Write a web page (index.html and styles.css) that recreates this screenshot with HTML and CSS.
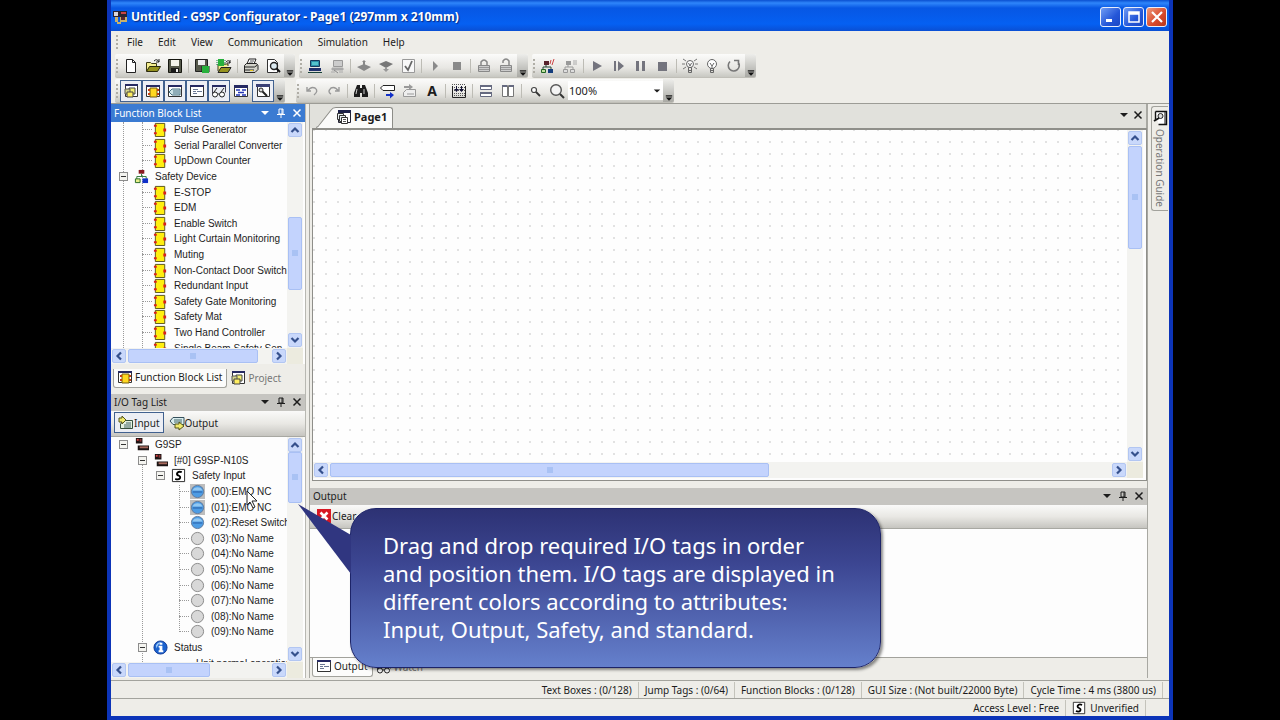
FILE: index.html
```html
<!DOCTYPE html>
<html lang="en">
<head>
<meta charset="utf-8">
<title>Untitled - G9SP Configurator - Page1</title>
<link rel="stylesheet" href="styles.css">
</head>
<body>
<svg class="defs" aria-hidden="true">
  <symbol id="block" viewBox="0 0 16 16"><path d="M2.500 1.500h10v14h-10z" fill="#ffee10" stroke="#55501a"/><path d="M1 3h3v2H1zM1 11h3v2H1zM11 7h3v3h-3z" fill="#d8201c"/></symbol>
  <symbol id="device" viewBox="0 0 16 16"><path d="M5 1h6v4H5z" fill="#8c1a22"/><path d="M8 5v3M3 11V8h10v3" fill="none" stroke="#2f7a3a"/><path d="M1.500 10.500h5v4h-5z" fill="#e8f08c" stroke="#226622"/><path d="M9 10h6v5H9z" fill="#1030c8"/></symbol>
  <symbol id="plc" viewBox="0 0 16 16"><path d="M2 1h7v6H2zM4 9h12v5H4z" fill="#1c1414"/><path d="M3 2h2v2H3z" fill="#d44"/><path d="M6 2h2v3H6z" fill="#833"/><path d="M6 10h9v2H6z" fill="#a7695c"/></symbol>
  <symbol id="safe" viewBox="0 0 16 16"><path d="M1.500 1.500h13v13h-13z" fill="#fff" stroke="#222"/><path d="M11.500 4.500Q8 3 6.500 5.500Q6 7.500 8 8Q10.500 9 9.500 11Q8 13 4.500 11.500" fill="none" stroke="#000" stroke-width="2"/></symbol>
  <symbol id="on" viewBox="0 0 16 16"><circle cx="8" cy="8" r="6.500" fill="#4d9ce4" stroke="#60799a"/><path d="M2.500 7A6 6 0 0 1 13.500 7z" fill="#93c8f2"/><path d="M3 8.500h10" stroke="#2559a2"/></symbol>
  <symbol id="off" viewBox="0 0 16 16"><circle cx="8" cy="8" r="6.500" fill="#d8d8d8" stroke="#858585"/></symbol>
  <symbol id="info" viewBox="0 0 16 16"><circle cx="8" cy="8" r="7" fill="#1b62cf" stroke="#123b96"/><path d="M3 6Q5 2 9 2.500Q5 4 4 9z" fill="#9dcbf8"/><path d="M7 3h3v2H7zM6 6h4v5h1v2H6v-2h1V8H6z" fill="#fff"/></symbol>
  <symbol id="down" viewBox="0 0 10 10"><path d="M1 3h8L5 7z" fill="currentColor"/></symbol>
  <symbol id="pin" viewBox="0 0 10 10"><path d="M3 1h4v5H3zM6 1v5M1 6.500h8M5 7v3" fill="none" stroke="currentColor"/></symbol>
  <symbol id="x" viewBox="0 0 10 10"><path d="M1.500 1.500l7 7M8.500 1.500l-7 7" fill="none" stroke="currentColor" stroke-width="1.500"/></symbol>
  <symbol id="chev" viewBox="0 0 10 10"><path d="M1.500 3L5 6.500L8.500 3" fill="none" stroke="#35508c" stroke-width="2.200"/></symbol>
  <symbol id="over" viewBox="0 0 10 10"><path d="M1 3h8" stroke="#111" stroke-width="1.500"/><path d="M1 5h8L5 9z" fill="#111"/></symbol>
  <symbol id="wblock" viewBox="0 0 16 16"><path d="M1.500 2.500h13v11h-13z" fill="#fff" stroke="#333"/><path d="M1 2h14v2H1z" fill="#262a62"/><path d="M5 5h7v9H5z" fill="#ffd820" stroke="#735c10"/><path d="M3 7h2M3 11h2M12 7h2M12 11h2" stroke="#c84010" stroke-width="2"/></symbol>
  <symbol id="wproj" viewBox="0 0 16 16"><path d="M2.500 1.500h12v12h-12z" fill="#fff" stroke="#333"/><path d="M2 1h13v2H2z" fill="#262a62"/><path d="M6 5h6v6H6z" fill="#f2ef70" stroke="#444"/><path d="M2 6h5v5H2z" fill="#d6d68c" stroke="#555"/><path d="M4 9h6v5H4z" fill="#ffee60" stroke="#444"/></symbol>
  <symbol id="wtag" viewBox="0 0 16 16"><path d="M1.500 2.500h13v11h-13z" fill="#fff" stroke="#333"/><path d="M1 2h14v2H1z" fill="#262a62"/><path d="M2 9l3-3h8v6H5z" fill="#cfe4e8" stroke="#467080"/><path d="M6 8h6M6 10h6" stroke="#507788"/></symbol>
  <symbol id="wout" viewBox="0 0 16 16"><path d="M1.500 2.500h13v11h-13z" fill="#fff" stroke="#333"/><path d="M1 2h14v2H1z" fill="#262a62"/><path d="M4 6.500h5M4 8.500h3M8 8.500h5M4 10.500h4" stroke="#6b7894"/></symbol>
  <symbol id="glasses" viewBox="0 0 16 16"><path d="M1.500 2.500h13v7M1.500 2.500v9" fill="none" stroke="#445"/><path d="M1 2h14v2H1z" fill="#262a62"/><circle cx="4" cy="11.500" r="2.500" fill="#fff" stroke="#222"/><circle cx="11" cy="11.500" r="2.500" fill="#fff" stroke="#222"/><path d="M6.500 11h2M3 9l3-4M10 9l3-4" stroke="#222" fill="none"/></symbol>
  <symbol id="wflow" viewBox="0 0 16 16"><path d="M1.500 2.500h13v11h-13z" fill="#fff" stroke="#333"/><path d="M1 2h14v3H1z" fill="#262a62"/><path d="M3 7h4M9 7h4M5 9.500h6M3 12h4M9 12h4" stroke="#2537b4" stroke-width="1.600"/></symbol>
  <symbol id="wguide" viewBox="0 0 16 16"><path d="M2.500 2.500h12v11h-12z" fill="#fff" stroke="#333"/><path d="M1 1h14v3H1z" fill="#3a4074"/><circle cx="6" cy="7" r="2" fill="#ddd" stroke="#222"/><path d="M7.500 8.500L12 13" stroke="#222" stroke-width="2"/></symbol>
  <symbol id="guide" viewBox="0 0 16 16"><path d="M3.500 1.500h11v13h-8M3.500 1.500v8" fill="#fff" stroke="#111" stroke-width="1.400"/><path d="M13 2v12" stroke="#111"/><circle cx="8.500" cy="6" r="2.500" fill="#ddd" stroke="#222"/><path d="M7 8L2 11" stroke="#111" stroke-width="2"/></symbol>
  <symbol id="new" viewBox="0 0 16 16"><path d="M3.500 1.500h6l3 3v10h-9z" fill="#fff" stroke="#222"/><path d="M9.500 1.500v3h3" fill="none" stroke="#222"/></symbol>
  <symbol id="open" viewBox="0 0 16 16"><path d="M1.500 13V4.500h4l1 1h5v3" fill="#f4ed90" stroke="#3c3a14"/><path d="M1.500 13.500l3-5h11l-3 5z" fill="#95921e" stroke="#2b2a0d"/><path d="M9 3q3-3 5 1M14 1v3h-3" fill="none" stroke="#222"/></symbol>
  <symbol id="save" viewBox="0 0 16 16"><path d="M1.500 1.500h13v13h-13z" fill="#55584a" stroke="#15160f"/><path d="M4 2h8v6H4z" fill="#f2f2ea"/><path d="M4 10h8v5H4z" fill="#181818"/><path d="M9 11h2v3H9z" fill="#eee"/></symbol>
  <symbol id="savec" viewBox="0 0 16 16"><path d="M1.500 1.500h12v12h-12z" fill="#55584a" stroke="#222"/><path d="M4 2h7v5H4z" fill="#eee"/><path d="M8 8h7v7H8z" fill="#27b03c"/><path d="M7 9h1M7 11h1M7 13h1M15 9h1M15 11h1M15 13h1" stroke="#111"/></symbol>
  <symbol id="openc" viewBox="0 0 16 16"><path d="M2 13V6h10v2" fill="#f4ed90" stroke="#3c3a14"/><path d="M2 14.500l3-5h10l-3 5z" fill="#95921e" stroke="#222"/><path d="M2 1h6v7H2z" fill="#27b03c"/><path d="M1 2v6M9 2v6" stroke="#174" stroke-dasharray="1 1"/><path d="M10 4q3-3 4 1M14 2v3h-3" fill="none" stroke="#222"/></symbol>
  <symbol id="print" viewBox="0 0 16 16"><path d="M4 6l2-5h7l-2 5" fill="#fff" stroke="#222"/><path d="M7 3h4M6 5h4" stroke="#555"/><path d="M1.500 7.500l2-2h10l1.500 2v4l-3 3H1.500z" fill="#d2d2ca" stroke="#222"/><path d="M1.500 9h10l3-2M2 12h9" fill="none" stroke="#222"/><path d="M7 12h3v1H7z" fill="#e8c81c"/></symbol>
  <symbol id="preview" viewBox="0 0 16 16"><path d="M2.500 1.500h7l3 3v10h-10z" fill="#fff" stroke="#333"/><circle cx="9" cy="8" r="3.500" fill="#dceaf0" stroke="#222" stroke-width="1.400"/><path d="M11.500 10.500L15 14" stroke="#111" stroke-width="2"/></symbol>
  <symbol id="pc" viewBox="0 0 16 16"><path d="M3.500 2.500h9v6h-9z" fill="#2c8fa8" stroke="#173a5c"/><path d="M5 4h6v3H5z" fill="#54c4cc"/><path d="M2 10h12v3H2z" fill="#20306c"/><path d="M1 14.500h14" stroke="#174038"/></symbol>
  <symbol id="pcoff" viewBox="0 0 16 16"><path d="M4.500 2.500h9v6h-9z" fill="#ccc" stroke="#999"/><path d="M3 10h11v2H3zM2 14h4M10 14h4" fill="#aaa" stroke="#aaa"/><path d="M5 12l4 3" stroke="#888"/></symbol>
  <symbol id="dl" viewBox="0 0 16 16"><path d="M8 2l2 2H9v3H7V4H6zM1 9l7-3 7 3-7 4z" fill="#888"/></symbol>
  <symbol id="ul" viewBox="0 0 16 16"><path d="M1 6l7-3 7 3-7 4z" fill="#777"/><path d="M7 9h2v2h2l-3 3-3-3h2z" fill="#999"/></symbol>
  <symbol id="check" viewBox="0 0 16 16"><path d="M2.500 1.500h12v13h-12z" fill="#f8f8f8" stroke="#999"/><path d="M5 8l3 4 4-9" fill="none" stroke="#666" stroke-width="1.800"/></symbol>
  <symbol id="play" viewBox="0 0 16 16"><path d="M4 3l9 5-9 5z" fill="#74747e"/></symbol>
  <symbol id="play2" viewBox="0 0 16 16"><path d="M6 3l5 5-5 5z" fill="#8a8a8a"/></symbol>
  <symbol id="stop" viewBox="0 0 16 16"><path d="M4 4h8v8H4z" fill="#8a8a8a"/></symbol>
  <symbol id="stop2" viewBox="0 0 16 16"><path d="M3 4h9v9H3z" fill="#74747e"/></symbol>
  <symbol id="step" viewBox="0 0 16 16"><path d="M3 3h2v10H3zM7 3l6 5-6 5z" fill="#74747e"/></symbol>
  <symbol id="pause" viewBox="0 0 16 16"><path d="M3 3h3v10H3zM9 3h3v10H9z" fill="#74747e"/></symbol>
  <symbol id="lock" viewBox="0 0 16 16"><path d="M5 8V4q3-4 6 0v4" fill="none" stroke="#888" stroke-width="1.500"/><path d="M2.500 7.500h11v6h-11z" fill="#ccc" stroke="#888"/><path d="M3 9.500h10M3 11.500h10" stroke="#999"/></symbol>
  <symbol id="unlock" viewBox="0 0 16 16"><path d="M5 5V3q3-4 6 0v5" fill="none" stroke="#888" stroke-width="1.500"/><path d="M2.500 7.500h11v6h-11z" fill="#ccc" stroke="#888"/><path d="M3 9.500h10M3 11.500h10" stroke="#999"/></symbol>
  <symbol id="sim" viewBox="0 0 16 16"><path d="M4 3h5v4H4z" fill="#57222b"/><path d="M6 7v2M3 11V9h8v2" fill="none" stroke="#243"/><path d="M1.500 11.500h4v3h-4z" fill="#bfe0a0" stroke="#262"/><path d="M8 11h5v4H8z" fill="#143d7c"/><path d="M11 2l-1 4M14 1l-2 6" stroke="#c44"/></symbol>
  <symbol id="simoff" viewBox="0 0 16 16"><path d="M4 3h5v4H4z" fill="#999"/><path d="M6 7v2M3 11V9h8v2" fill="none" stroke="#999"/><path d="M1.500 11.500h4v3h-4zM8.500 11.500h4v3h-4z" fill="#ddd" stroke="#999"/><path d="M12 2v5M14 2v5" stroke="#aaa"/></symbol>
  <symbol id="bulb" viewBox="0 0 16 16"><circle cx="8" cy="6" r="4.500" fill="#fff" stroke="#666"/><path d="M6.500 10.500h3v4h-3zM6 12.500h4M6 5l2 3 2-3M8 8v2" fill="none" stroke="#666"/></symbol>
  <symbol id="bulbon" viewBox="0 0 16 16"><circle cx="8" cy="6" r="3.500" fill="#fff" stroke="#666"/><path d="M6.500 9.500h3v5h-3zM6 12.500h4M6.500 5L8 8l1.500-3" fill="none" stroke="#666"/><path d="M1 1l3 2M0 6h3M1 11l3-2M15 1l-3 2M16 6h-3M15 11l-3-2" stroke="#777"/></symbol>
  <symbol id="reset" viewBox="0 0 16 16"><path d="M4 3.500A5.500 5.500 0 1 0 12 4M8 2.500h4.500V7" fill="none" stroke="#777" stroke-width="1.600"/></symbol>
  <symbol id="undo" viewBox="0 0 16 16"><path d="M3 4v4h4M3.500 8Q7 3 11 5Q15 8 10 12" fill="none" stroke="#999" stroke-width="1.400"/></symbol>
  <symbol id="redo" viewBox="0 0 16 16"><path d="M13 4v4H9M12.500 8Q9 3 5 5Q1 9 5 11" fill="none" stroke="#999" stroke-width="1.400"/></symbol>
  <symbol id="find" viewBox="0 0 16 16"><path d="M4 2h3v3h2V2h3l3 8v4H9v-4H7v4H1v-4z" fill="#1c1c1c"/><path d="M4 6l-1 5M11 6v5" stroke="#ccc"/></symbol>
  <symbol id="jump" viewBox="0 0 16 16"><path d="M0.500 5L3 2.500h11.500v5H3z" fill="#fff" stroke="#222"/><path d="M6 12h5" stroke="#1230c8" stroke-width="2"/><path d="M10 9l4 3-4 3.500z" fill="#1230c8"/></symbol>
  <symbol id="jump2" viewBox="0 0 16 16"><path d="M4.500 6.500h9v7h-12v-4z" fill="#eee" stroke="#999"/><path d="M2 4h6" stroke="#999" stroke-width="2"/><path d="M7 1l4 3-4 3z" fill="#999"/><path d="M5 11h7" stroke="#999"/></symbol>
  <symbol id="grid" viewBox="0 0 16 16"><path d="M1 1.500h14M1 4.500h14M1 7.500h14M1 10.500h14M1 12.500h14" stroke="#555" stroke-dasharray="1 1"/><path d="M1.500 3v11.500h13V3" fill="none" stroke="#222"/><path d="M5.500 3v5M10.500 3v5" stroke="#113"/><path d="M3 6h5l-2.500 3zM8 6h5l-2.500 3z" fill="#113"/></symbol>
  <symbol id="rows" viewBox="0 0 16 16"><path d="M2.500 2.500h11v4h-11zM2.500 9.500h11v4h-11z" fill="#fff" stroke="#666a80"/><path d="M2 2h12v2H2zM2 9h12v2H2z" fill="#666a80"/></symbol>
  <symbol id="cols" viewBox="0 0 16 16"><path d="M2.500 2.500h5v11h-5zM8.500 2.500h5v11h-5z" fill="#fff" stroke="#777"/><path d="M2 2h5v2H2zM9 2h5v2H9z" fill="#666a80"/></symbol>
  <symbol id="zs" viewBox="0 0 16 16"><circle cx="7" cy="7" r="2.500" fill="#fff" stroke="#444" stroke-width="1.200"/><path d="M9 9l4 4" stroke="#333" stroke-width="1.800"/></symbol>
  <symbol id="zl" viewBox="0 0 16 16"><circle cx="7" cy="7" r="5.300" fill="#f4f4f4" stroke="#555" stroke-width="1.400"/><path d="M11 11l4 4" stroke="#333" stroke-width="2"/></symbol>
  <symbol id="tin" viewBox="0 0 16 16"><path d="M5.500 5.500h9v8h-12V9z" fill="#e4f0e0" stroke="#35503c"/><path d="M8 8h5M6 10h7M6 12h7" stroke="#466"/><path d="M1 3h3V1l4 4-4 4V7H1z" fill="#f0e96c" stroke="#555518"/></symbol>
  <symbol id="tout" viewBox="0 0 16 16"><path d="M1 6l3-3.500h11v7H4z" fill="#d8ecee" stroke="#35505c"/><path d="M5 5h8M5 7h8" stroke="#466"/><path d="M6 9h4V7l5 4-5 4v-2H6z" fill="#f0e96c" stroke="#555518"/></symbol>
  <symbol id="clear" viewBox="0 0 16 16"><path d="M1 1h14v14H1z" fill="#d81824"/><path d="M4.500 4.500l7 7M11.500 4.500l-7 7" stroke="#fff" stroke-width="2.600"/></symbol>
  <symbol id="pages" viewBox="0 0 16 16"><path d="M2.500 1.500h12v12h-12z" fill="#fff" stroke="#223"/><path d="M2 1h13v3H2z" fill="#1c2148"/><path d="M1.500 4.500h6v6h-6z" fill="#e6eef0" stroke="#333"/><path d="M3.500 6.500h6v6h-6z" fill="#e6eef0" stroke="#333"/><path d="M5.500 8.500h6v6h-6z" fill="#fff" stroke="#333"/><path d="M7 10.500h3M7 12.500h3" stroke="#555"/></symbol>
  <symbol id="app" viewBox="0 0 16 16"><path d="M1 2h14v6H1z" fill="#2c2430"/><path d="M2 3h4v4H2z" fill="#d9d6dc"/><path d="M9 3h5v2H9z" fill="#c44"/><path d="M3 8h3v5h2V8h3v3h2V8h2v5H9v2H5v-2H3z" fill="#c9b06a"/><path d="M9 8h4v3H9z" fill="#5a2630"/></symbol>
</svg>

<div class="window">
  <header class="titlebar">
    <svg class="ic"><use href="#app"/></svg>
    <h1>Untitled - G9SP Configurator - Page1 (297mm x 210mm)</h1>
    <button class="cap" aria-label="Minimize"><svg viewBox="0 0 16 16"><path d="M3 10h6v3H3z" fill="#fff"/></svg></button>
    <button class="cap" aria-label="Maximize"><svg viewBox="0 0 16 16"><path d="M3 4h10v9H3zM3 3h10v2H3z" fill="none" stroke="#fff" stroke-width="1.500"/></svg></button>
    <button class="cap close" aria-label="Close"><svg viewBox="0 0 16 16"><path d="M3 3l10 10M13 3L3 13" stroke="#fff" stroke-width="2.200"/></svg></button>
  </header>
  <nav class="menu">
    <i class="grip"></i><button>File</button><button>Edit</button><button>View</button><button>Communication</button><button>Simulation</button><button>Help</button>
  </nav>
  <div class="bars">
    <div class="bar"><i class="grip"></i>
      <button aria-label="New"><svg class="ic"><use href="#new"/></svg></button><button aria-label="Open"><svg class="ic"><use href="#open"/></svg></button><button aria-label="Save"><svg class="ic"><use href="#save"/></svg></button><i class="sep"></i>
      <button aria-label="Save configuration"><svg class="ic"><use href="#savec"/></svg></button><button aria-label="Open configuration"><svg class="ic"><use href="#openc"/></svg></button><i class="sep"></i>
      <button aria-label="Print"><svg class="ic"><use href="#print"/></svg></button><button aria-label="Print preview"><svg class="ic"><use href="#preview"/></svg></button>
      <button class="more" aria-label="More"><svg><use href="#over"/></svg></button></div>
    <div class="bar"><i class="grip"></i>
      <button aria-label="Connect"><svg class="ic"><use href="#pc"/></svg></button><button aria-label="Disconnect"><svg class="ic"><use href="#pcoff"/></svg></button><i class="sep"></i>
      <button aria-label="Upload"><svg class="ic"><use href="#dl"/></svg></button><button aria-label="Download"><svg class="ic"><use href="#ul"/></svg></button><button aria-label="Verify"><svg class="ic"><use href="#check"/></svg></button><i class="sep"></i>
      <button aria-label="Run"><svg class="ic"><use href="#play2"/></svg></button><button aria-label="Stop"><svg class="ic"><use href="#stop"/></svg></button><i class="sep"></i>
      <button aria-label="Lock"><svg class="ic"><use href="#lock"/></svg></button><button aria-label="Unlock"><svg class="ic"><use href="#unlock"/></svg></button>
      <button class="more" aria-label="More"><svg><use href="#over"/></svg></button></div>
    <div class="bar"><i class="grip"></i>
      <button aria-label="Start simulation"><svg class="ic"><use href="#sim"/></svg></button><button aria-label="End simulation"><svg class="ic"><use href="#simoff"/></svg></button><i class="sep"></i>
      <button aria-label="Play"><svg class="ic"><use href="#play"/></svg></button><button aria-label="Step"><svg class="ic"><use href="#step"/></svg></button><button aria-label="Pause"><svg class="ic"><use href="#pause"/></svg></button><button aria-label="Stop simulation"><svg class="ic"><use href="#stop2"/></svg></button><i class="sep"></i>
      <button aria-label="Light on"><svg class="ic"><use href="#bulbon"/></svg></button><button aria-label="Light off"><svg class="ic"><use href="#bulb"/></svg></button><button aria-label="Reset"><svg class="ic"><use href="#reset"/></svg></button>
      <button class="more" aria-label="More"><svg><use href="#over"/></svg></button></div>
  </div>
  <div class="bars second">
    <div class="bar"><i class="grip"></i>
      <button class="on" aria-label="Project window"><svg class="ic"><use href="#wproj"/></svg></button><button class="on" aria-label="Function block window"><svg class="ic"><use href="#wblock"/></svg></button><button class="on" aria-label="Tag window"><svg class="ic"><use href="#wtag"/></svg></button><button class="on" aria-label="Output window"><svg class="ic"><use href="#wout"/></svg></button><button class="on" aria-label="Watch window"><svg class="ic"><use href="#glasses"/></svg></button><button aria-label="Flow window"><svg class="ic"><use href="#wflow"/></svg></button><button class="on" aria-label="Guide window"><svg class="ic"><use href="#wguide"/></svg></button>
      <button class="more" aria-label="More"><svg><use href="#over"/></svg></button></div>
    <div class="bar edit"><i class="grip"></i>
      <button aria-label="Undo"><svg class="ic"><use href="#undo"/></svg></button><button aria-label="Redo"><svg class="ic"><use href="#redo"/></svg></button><i class="sep"></i>
      <button aria-label="Find"><svg class="ic"><use href="#find"/></svg></button><i class="sep"></i>
      <button aria-label="Jump out"><svg class="ic"><use href="#jump"/></svg></button><button aria-label="Jump in"><svg class="ic"><use href="#jump2"/></svg></button><button class="letter">A</button><i class="sep"></i>
      <button aria-label="Snap"><svg class="ic"><use href="#grid"/></svg></button><i class="sep"></i>
      <button aria-label="Split rows"><svg class="ic"><use href="#rows"/></svg></button><button aria-label="Split columns"><svg class="ic"><use href="#cols"/></svg></button><i class="sep"></i>
      <button aria-label="Zoom out"><svg class="ic"><use href="#zs"/></svg></button><button aria-label="Zoom in"><svg class="ic"><use href="#zl"/></svg></button>
      <span class="combo"><select aria-label="Zoom"><option>100%</option></select><svg><use href="#down"/></svg></span>
      <button class="more" aria-label="More"><svg><use href="#over"/></svg></button></div>
  </div>

  <main class="work">
    <aside class="left">
      <section class="panel">
        <header class="head active"><h2>Function Block List</h2><button aria-label="Menu"><svg><use href="#down"/></svg></button><button aria-label="Pin"><svg><use href="#pin"/></svg></button><button aria-label="Close panel"><svg><use href="#x"/></svg></button></header>
        <div class="scrollbox">
          <div class="tree">
            <i class="stem root"></i><i class="stem first"></i>
            <ul>
              <li class="l2"><svg class="ic"><use href="#block"/></svg>Pulse Generator</li>
              <li class="l2"><svg class="ic"><use href="#block"/></svg>Serial Parallel Converter</li>
              <li class="l2"><svg class="ic"><use href="#block"/></svg>UpDown Counter</li>
              <li class="l1 node"><i class="box"></i><svg class="ic"><use href="#device"/></svg>Safety Device</li>
              <li class="l2"><svg class="ic"><use href="#block"/></svg>E-STOP</li>
              <li class="l2"><svg class="ic"><use href="#block"/></svg>EDM</li>
              <li class="l2"><svg class="ic"><use href="#block"/></svg>Enable Switch</li>
              <li class="l2"><svg class="ic"><use href="#block"/></svg>Light Curtain Monitoring</li>
              <li class="l2"><svg class="ic"><use href="#block"/></svg>Muting</li>
              <li class="l2"><svg class="ic"><use href="#block"/></svg>Non-Contact Door Switch</li>
              <li class="l2"><svg class="ic"><use href="#block"/></svg>Redundant Input</li>
              <li class="l2"><svg class="ic"><use href="#block"/></svg>Safety Gate Monitoring</li>
              <li class="l2"><svg class="ic"><use href="#block"/></svg>Safety Mat</li>
              <li class="l2"><svg class="ic"><use href="#block"/></svg>Two Hand Controller</li>
              <li class="l2"><svg class="ic"><use href="#block"/></svg>Single Beam Safety Sen</li>
            </ul>
          </div>
          <div class="vs"><i class="arrow up"><svg><use href="#chev"/></svg></i><span class="track mid"><b></b></span><i class="arrow"><svg><use href="#chev"/></svg></i></div>
          <div class="hs"><i class="arrow lt"><svg><use href="#chev"/></svg></i><span class="track long"><b></b></span><i class="arrow rt"><svg><use href="#chev"/></svg></i></div>
          <i class="corner"></i>
        </div>
        <div class="tabs"><button class="cur"><svg class="ic"><use href="#wblock"/></svg>Function Block List</button><button><svg class="ic"><use href="#wproj"/></svg>Project</button></div>
      </section>
      <section class="panel">
        <header class="head"><h2>I/O Tag List</h2><button aria-label="Menu"><svg><use href="#down"/></svg></button><button aria-label="Pin"><svg><use href="#pin"/></svg></button><button aria-label="Close panel"><svg><use href="#x"/></svg></button></header>
        <div class="tools"><button class="on"><svg class="ic"><use href="#tin"/></svg>Input</button><button><svg class="ic"><use href="#tout"/></svg>Output</button></div>
        <div class="scrollbox">
          <div class="tree">
            <i class="stem second"></i><i class="stem third"></i>
            <ul>
              <li class="l1 node"><i class="box"></i><svg class="ic"><use href="#plc"/></svg>G9SP</li>
              <li class="l2 node"><i class="box"></i><svg class="ic"><use href="#plc"/></svg>[#0] G9SP-N10S</li>
              <li class="l3 node"><i class="box"></i><svg class="ic"><use href="#safe"/></svg>Safety Input</li>
              <li class="l4 used"><svg class="ic"><use href="#on"/></svg>(00):EMO NC</li>
              <li class="l4 used"><svg class="ic"><use href="#on"/></svg>(01):EMO NC</li>
              <li class="l4"><svg class="ic"><use href="#on"/></svg>(02):Reset Switch</li>
              <li class="l4"><svg class="ic"><use href="#off"/></svg>(03):No Name</li>
              <li class="l4"><svg class="ic"><use href="#off"/></svg>(04):No Name</li>
              <li class="l4"><svg class="ic"><use href="#off"/></svg>(05):No Name</li>
              <li class="l4"><svg class="ic"><use href="#off"/></svg>(06):No Name</li>
              <li class="l4"><svg class="ic"><use href="#off"/></svg>(07):No Name</li>
              <li class="l4"><svg class="ic"><use href="#off"/></svg>(08):No Name</li>
              <li class="l4"><svg class="ic"><use href="#off"/></svg>(09):No Name</li>
              <li class="l2 node"><i class="box"></i><svg class="ic"><use href="#info"/></svg>Status</li>
              <li class="l3 bare">Unit normal operation</li>
            </ul>
          </div>
          <div class="vs"><i class="arrow up"><svg><use href="#chev"/></svg></i><span class="track top"><b></b></span><i class="arrow"><svg><use href="#chev"/></svg></i></div>
          <div class="hs"><i class="arrow lt"><svg><use href="#chev"/></svg></i><span class="track half"><b></b></span><i class="arrow rt"><svg><use href="#chev"/></svg></i></div>
          <i class="corner"></i>
        </div>
      </section>
    </aside>

    <div class="center">
      <div class="pagetabs">
        <button class="pagetab"><svg class="slope" viewBox="0 0 24 20" preserveAspectRatio="none"><path d="M0 20L2 19L19 2Q21 0.500 24 0.500V20z" fill="#fbfbfa"/><path d="M0 19.500Q3 19 5 16L18 3Q20 0.500 24 0.500" fill="none" stroke="#8d8d88"/></svg><span><svg class="ic"><use href="#pages"/></svg>Page1</span></button>
        <button class="mini" aria-label="Pages"><svg><use href="#down"/></svg></button><button class="mini" aria-label="Close page"><svg><use href="#x"/></svg></button>
      </div>
      <div class="scrollbox canvas">
        <div class="sheet"></div>
        <div class="vs"><i class="arrow up"><svg><use href="#chev"/></svg></i><span class="track page"><b></b></span><i class="arrow"><svg><use href="#chev"/></svg></i></div>
        <div class="hs"><i class="arrow lt"><svg><use href="#chev"/></svg></i><span class="track wide"><b></b></span><i class="arrow rt"><svg><use href="#chev"/></svg></i></div>
        <i class="corner"></i>
      </div>
      <section class="output">
        <header class="head"><h2>Output</h2><button aria-label="Menu"><svg><use href="#down"/></svg></button><button aria-label="Pin"><svg><use href="#pin"/></svg></button><button aria-label="Close panel"><svg><use href="#x"/></svg></button></header>
        <div class="tools"><button><svg class="ic"><use href="#clear"/></svg>Clear</button></div>
        <div class="log"></div>
        <div class="tabs"><button class="cur"><svg class="ic"><use href="#wout"/></svg>Output</button><button><svg class="ic"><use href="#glasses"/></svg>Watch</button></div>
      </section>
    </div>

    <aside class="right"><button><svg class="ic"><use href="#guide"/></svg>Operation Guide</button></aside>

    <div class="callout">
      <svg class="tail" viewBox="0 0 54 72"><path d="M1 1L54 32V71z" fill="#303680"/></svg>
      <p>Drag and drop required I/O tags in order<br>and position them. I/O tags are displayed in<br>different colors according to attributes:<br>Input, Output, Safety, and standard.</p>
    </div>
    <svg class="cursor" viewBox="0 0 12 20"><path d="M1 1v14l3-3 3 6 2-1-3-6h5z" fill="#fff" stroke="#222"/></svg>
  </main>

  <footer class="status">
    <div><span>Text Boxes : (0/128)</span><span>Jump Tags : (0/64)</span><span>Function Blocks : (0/128)</span><span>GUI Size : (Not built/22000 Byte)</span><span>Cycle Time : 4 ms (3800 us)</span></div>
    <div class="access"><span>Access Level : Free</span><span><svg class="ic"><use href="#safe"/></svg>Unverified</span></div>
  </footer>
</div>
</body>
</html>
```

FILE: styles.css
```css
* { box-sizing: border-box; }
body {
  margin: 0;
  padding: 0 107px;
  height: 100vh;
  display: flex;
  background: #000;
  color: #1c1c1c;
  font: 10px/16px "Noto Sans", sans-serif;
}
.defs { position: absolute; width: 0; height: 0; }
button {
  border: 0;
  padding: 0;
  background: none;
  color: inherit;
  font: inherit;
  display: flex;
  align-items: center;
  justify-content: center;
}
svg { width: 10px; height: 10px; flex: none; display: block; }
.ic { width: 16px; height: 16px; }
h1, h2 { margin: 0; font: inherit; }
ul { list-style: none; margin: 0; padding: 0; }

.window {
  flex: 1;
  min-width: 0;
  display: flex;
  flex-direction: column;
  border: solid #0c34b8;
  border-width: 0 4px 4px;
  background: #eeede8;
}
.titlebar {
  height: 31px;
  flex: none;
  padding: 3px 2px 0 0;
  display: flex;
  align-items: center;
  gap: 2px;
  background: linear-gradient(#0a4fd0, #2f86fa 3px, #0757e4 8px, #0560f2 24px, #0a4fd4);
  color: #fff;
}
.titlebar .ic { margin: 0 1px; }
.titlebar h1 { flex: 1; font-size: 12px; font-weight: 700; text-shadow: 1px 1px 1px #0a2a80; white-space: nowrap; }
.cap {
  width: 21px;
  height: 20px;
  border: 1px solid #e8eefc;
  border-radius: 3px;
  background: linear-gradient(135deg, #6f9cf4, #2456d8 60%, #1c48c4);
}
.cap svg { width: 16px; height: 16px; }
.cap.close { background: linear-gradient(135deg, #ee9a7c, #d8482a 60%, #b8381c); }

.menu { height: 23px; flex: none; padding: 0 0 2px 4px; display: flex; align-items: center; }
.menu button { margin-right: 15px; }
.menu .grip { margin-right: 7px; }
.grip {
  width: 5px;
  height: 16px;
  background: radial-gradient(circle, #b0aea6 1px, transparent 1px) 0 0 / 4px 4px;
}
.bars { height: 25px; flex: none; padding-left: 4px; display: flex; align-items: flex-start; }
.second { border-bottom: 1px solid #9c9c96; }
.bar {
  height: 24px;
  display: flex;
  align-items: center;
  background: linear-gradient(#fbfbfa, #e8e7e3 60%, #c8c8c2);
  border-bottom: 1px solid #c0bfb8;
  border-radius: 2px;
  margin-right: 4px;
}
.bar > button { width: 22px; height: 22px; }
.bar > .on { border: 1px solid #41618f; background: #eceef4; }
.bar > .more { width: 11px; height: 23px; align-items: flex-end; background: linear-gradient(#ededea, #a9a9a4); border-radius: 0 2px 2px 0; }
.more svg { width: 8px; height: 9px; }
.sep { width: 1px; height: 14px; margin: 0 2px; background: #bdbcb5; }
.bar.edit { margin-left: 7px; }
.bar .letter { font: 700 14px/20px "Noto Sans", sans-serif; }
.combo { width: 95px; height: 19px; display: flex; align-items: center; background: #fff; padding-right: 2px; }
.combo select { flex: 1; min-width: 0; border: 0; background: none; font: inherit; font-size: 11px; color: inherit; appearance: none; padding: 0 1px; }
.combo svg { width: 8px; }

.work { flex: 1; min-height: 0; display: flex; position: relative; padding-bottom: 2px; }
.left { width: 195px; display: flex; flex-direction: column; gap: 6px; border-right: 1px solid #b8b8b2; }
.panel { flex: 1; min-height: 0; display: flex; flex-direction: column; }
.head {
  height: 17px;
  flex: none;
  padding: 0 3px 1px;
  display: flex;
  align-items: center;
  gap: 6px;
  background: #c6c5c1;
}
.head h2 { flex: 1; }
.head.active { height: 18px; background: #3b7bd2; color: #fff; }
.scrollbox {
  flex: 1;
  min-height: 0;
  display: grid;
  grid-template-columns: minmax(0, 1fr) 16px;
  grid-template-rows: minmax(0, 1fr) 16px;
  padding-right: 2px;
  background: #fdfdfd;
}
.tree { position: relative; overflow: hidden; font-family: "Liberation Sans", Arial, sans-serif; }
.tree ul { height: 234px; display: grid; grid-template-rows: repeat(15, minmax(0, 1fr)); position: relative; }
.tree li { display: flex; align-items: center; white-space: nowrap; line-height: 15px; }
.tree li > .ic { width: 15px; height: 15px; margin: 0 6px 0 1px; }
.tree li::before { content: ""; width: 10px; border-top: 1px dotted #999; }
.tree li.node::before { display: none; }
.l1 { padding-left: 8px; }
.l2 { padding-left: 31px; }
.l3 { padding-left: 45px; }
.l4 { padding-left: 68px; }
.l2.node { padding-left: 27px; }
.l3.bare { padding-left: 75px; }
.used > .ic { background: #bdbdbd; }
.box {
  width: 9px;
  height: 9px;
  margin-right: 5px;
  border: 1px solid #8c8c8c;
  background: linear-gradient(#333, #333) center / 5px 1px no-repeat #f4f4f0;
}
.stem { position: absolute; top: 0; bottom: 0; border-left: 1px dotted #999; }
.stem.root { left: 12px; }
.stem.first { left: 31px; }
.stem.second { left: 31px; top: 24px; }
.stem.third { left: 68px; top: 48px; bottom: 30px; }

.vs, .hs { display: flex; background: #f3f3f0; padding: 1px; min-width: 0; min-height: 0; }
.vs { flex-direction: column; }
.corner { background: #ecebdf; }
.arrow {
  width: 14px;
  height: 14px;
  flex: none;
  display: flex;
  align-items: center;
  justify-content: center;
  border: 1px solid #b2c6f2;
  border-radius: 2px;
  background: #c9d8fb;
}
.up svg { transform: rotate(180deg); }
.lt svg { transform: rotate(90deg); }
.rt svg { transform: rotate(-90deg); }
.track { flex: 1; display: flex; min-width: 0; min-height: 0; }
.vs .track { flex-direction: column; }
.track b {
  flex: none;
  border: 1px solid #a9c0f4;
  border-radius: 2px;
  background: linear-gradient(#a9c2f4, #a9c2f4) center / 6px 6px no-repeat #c3d3fd;
}
.mid b { margin-top: 80px; height: 37%; }
.top b { height: 26%; }
.page b { height: 34%; margin-top: 1px; }
.long b { width: 89%; margin-left: 2px; }
.half b { width: 56%; margin-left: 2px; }
.wide b { width: 56%; margin-left: 2px; }

.tabs { height: 19px; flex: none; display: flex; padding-left: 2px; color: #777; }
.panel .tabs { margin-top: 5px; }
.tabs button { gap: 2px; padding: 0 4px 2px 3px; }
.tabs .cur { background: #fcfcfb; border: 1px solid #a2a29c; border-top: 0; border-radius: 0 0 3px 3px; color: #1c1c1c; }
.tools {
  height: 26px;
  flex: none;
  padding: 1px 3px 3px;
  display: flex;
  gap: 2px;
  background: linear-gradient(#fafaf9, #e9e8e4 50%, #c6c5c0);
  border-bottom: 1px solid #a8a8a2;
}
.tools button { padding: 0 3px; }
.tools .on { border: 1px solid #41618f; background: #eceef4; }

.center { flex: 1; min-width: 0; margin-left: 3px; display: flex; flex-direction: column; border-left: 1px solid #a8a8a2; }
.pagetabs { height: 24px; flex: none; padding: 3px 1px 0 6px; display: flex; align-items: center; background: #e1e1dc; border-right: 1px solid #a8a8a2; }
.pagetab { height: 21px; margin-right: auto; font-weight: 700; font-size: 11px; }
.pagetab .slope { width: 20px; height: 21px; }
.pagetab span { height: 21px; display: flex; align-items: center; gap: 2px; padding: 0 5px 2px 0; background: #fbfbfa; border: 1px solid #8d8d88; border-width: 1px 1px 0 0; border-radius: 0 3px 0 0; }
.mini { width: 14px; height: 20px; align-items: flex-start; padding-top: 2px; }
.canvas { margin-left: 2px; border: 1px solid #8f8f8a; border-top-width: 2px; padding-right: 3px; padding-bottom: 2px; }
.sheet { background: radial-gradient(circle at 1px 1px, #e2e2e2 1px, transparent 1px) 12px 11px / 12px 12px; background-color: #fefefe; }
.output { height: 190px; flex: none; margin-top: 7px; display: flex; flex-direction: column; }
.output .tools { height: 24px; }
.log { flex: 1; background: #fdfdfd; border-bottom: 1px solid #a2a29c; }
.output .tabs { margin-bottom: 1px; }

.right { width: 22px; padding: 2px 1px 0 3px; border-left: 1px solid #a8a8a2; }
.right button { writing-mode: vertical-rl; gap: 3px; padding: 3px 0; border: 1px solid #a2a29c; border-right: 0; border-radius: 3px 0 0 3px; color: #777; }

.callout {
  position: absolute;
  left: 239px;
  top: 404px;
  width: 531px;
  padding: 22px 32px 24px;
  border: 1px solid #1d2468;
  border-radius: 26px;
  background: linear-gradient(#2d3274, #3c4692 35%, #6580cc);
  box-shadow: 2px 2px 3px rgba(0, 0, 0, .45);
  color: #fff;
}
.callout p { margin: 0; font-size: 22px; line-height: 28px; white-space: nowrap; }
.tail { position: absolute; left: -54px; top: -6px; width: 54px; height: 72px; }
.cursor { position: absolute; left: 135px; top: 386px; width: 12px; height: 20px; }

.status { flex: none; }
.status > div { height: 18px; display: flex; justify-content: flex-end; align-items: center; border-top: 1px solid #a3a39d; padding-right: 6px; }
.status span { display: flex; align-items: center; gap: 4px; padding: 0 6px; border-right: 1px solid #c4c3bb; }
.status .access { padding-right: 23px; }
.status .ic { width: 14px; height: 14px; }
```
